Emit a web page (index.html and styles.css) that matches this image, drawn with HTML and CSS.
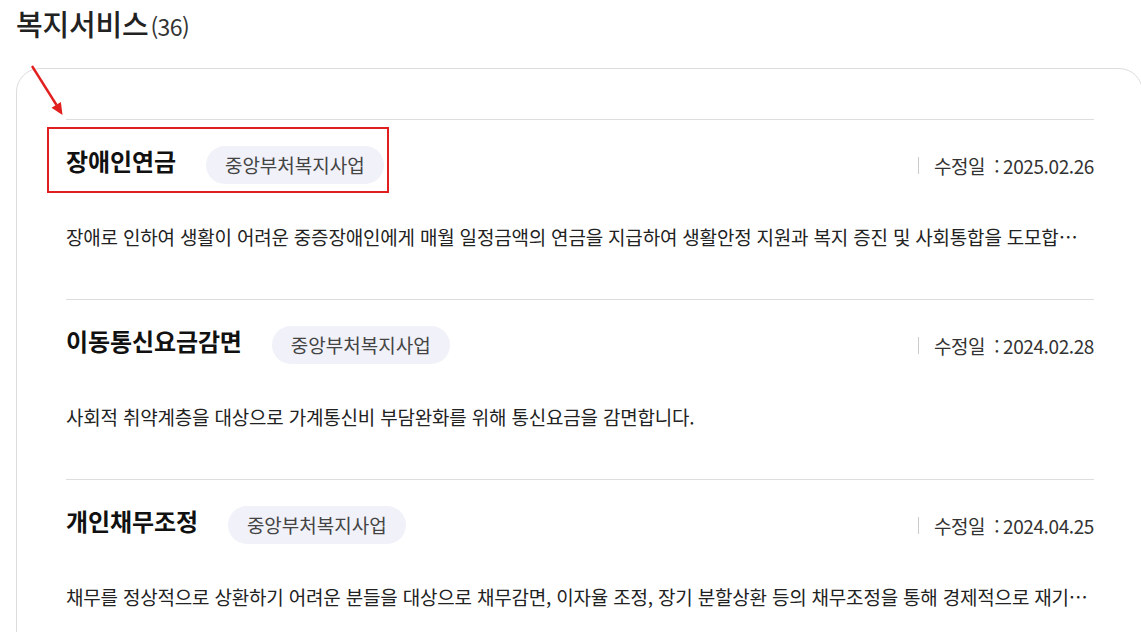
FILE: index.html
```html
<!DOCTYPE html>
<html lang="ko">
<head>
    <meta charset="UTF-8">
    <title>복지서비스</title>
    <link rel="stylesheet" href="styles.css">
</head>
<body>
    <div class="page">
        <h2 class="section-title">복지서비스<span class="count">(36)</span></h2>
        <div class="card">
            <!-- 표시 화살표 -->
            <svg class="arrow" width="40" height="54" viewBox="0 0 40 54">
                <line x1="3" y1="1" x2="27.5" y2="40" stroke="#e21f1f" stroke-width="2.4"/>
                <polygon points="33.5,50 31.9,36.9 22.5,42.7" fill="#e21f1f"/>
            </svg>
            <ul class="service-list">
                <li class="service-item">
                    <div class="highlight"></div>
                    <div class="item-head">
                        <h3 class="item-title">장애인연금</h3>
                        <span class="badge">중앙부처복지사업</span>
                        <span class="date">수정일<span class="colon">:</span>2025.02.26</span>
                    </div>
                    <p class="item-desc">장애로 인하여 생활이 어려운 중증장애인에게 매월 일정금액의 연금을 지급하여 생활안정 지원과 복지 증진 및 사회통합을 도모합니다.</p>
                </li>
                <li class="service-item">
                    <div class="item-head">
                        <h3 class="item-title">이동통신요금감면</h3>
                        <span class="badge">중앙부처복지사업</span>
                        <span class="date">수정일<span class="colon">:</span>2024.02.28</span>
                    </div>
                    <p class="item-desc">사회적 취약계층을 대상으로 가계통신비 부담완화를 위해 통신요금을 감면합니다.</p>
                </li>
                <li class="service-item">
                    <div class="item-head">
                        <h3 class="item-title">개인채무조정</h3>
                        <span class="badge">중앙부처복지사업</span>
                        <span class="date">수정일<span class="colon">:</span>2024.04.25</span>
                    </div>
                    <p class="item-desc">채무를 정상적으로 상환하기 어려운 분들을 대상으로 채무감면, 이자율 조정, 장기 분할상환 등의 채무조정을 통해 경제적으로 재기할 수 있도록 지원합니다.</p>
                </li>
            </ul>
        </div>
    </div>
</body>
</html>
```

FILE: styles.css
```css
html, body {
    overflow: hidden;
}
body {
    margin: 0;
    font-family: "Noto Sans CJK KR", "Noto Sans", sans-serif;
    color: #222;
    background-color: #fff;
}
.page {
    padding-left: 16px;
}
.section-title {
    margin: 0;
    padding-top: 5px;
    font-size: 29px;
    font-weight: 500;
    line-height: 36px;
    letter-spacing: -0.2px;
    color: #222;
}
.count {
    margin-left: 2px;
    font-size: 23px;
    font-weight: 400;
    letter-spacing: -0.6px;
    color: #333;
}
.card {
    position: relative;
    width: 1127px;
    box-sizing: border-box;
    margin-top: 24px;
    padding: 50px 48px 0 49px;
    border: 1px solid #ddd;
    border-radius: 24px;
}
.arrow {
    position: absolute;
    left: 12px;
    top: -4px;
    overflow: visible;
}
.service-list {
    list-style: none;
    margin: 0;
    padding: 0;
}
.service-item {
    position: relative;
    border-top: 1px solid #ddd;
    padding: 26px 0 48px;
}
/* 빨간 표시 박스 */
.highlight {
    position: absolute;
    left: -19px;
    top: 7px;
    width: 342px;
    height: 66px;
    box-sizing: border-box;
    border: 2px solid #e21f1f;
}
.item-head {
    display: flex;
    align-items: flex-start;
}
.item-title {
    margin: 0;
    font-size: 24px;
    font-weight: 700;
    line-height: 30px;
    letter-spacing: -0.1px;
    color: #111;
}
.badge {
    margin-left: 30px;
    height: 38px;
    padding: 0 19px;
    border-radius: 19px;
    background-color: #f1f1f9;
    font-size: 19px;
    line-height: 38px;
    color: #444;
}
.date {
    margin-left: auto;
    align-self: center;
    display: flex;
    align-items: center;
    font-size: 19px;
    letter-spacing: -0.4px;
    color: #333;
}
.date::before {
    content: "";
    width: 1px;
    height: 17px;
    margin-right: 15px;
    background-color: #ccc;
}
.colon {
    margin: 0 4px 0 9px;
}
.item-desc {
    margin: 39px 0 0;
    font-size: 19px;
    line-height: 28px;
    letter-spacing: -0.2px;
    white-space: nowrap;
    overflow: hidden;
    text-overflow: ellipsis;
    color: #222;
}
```
